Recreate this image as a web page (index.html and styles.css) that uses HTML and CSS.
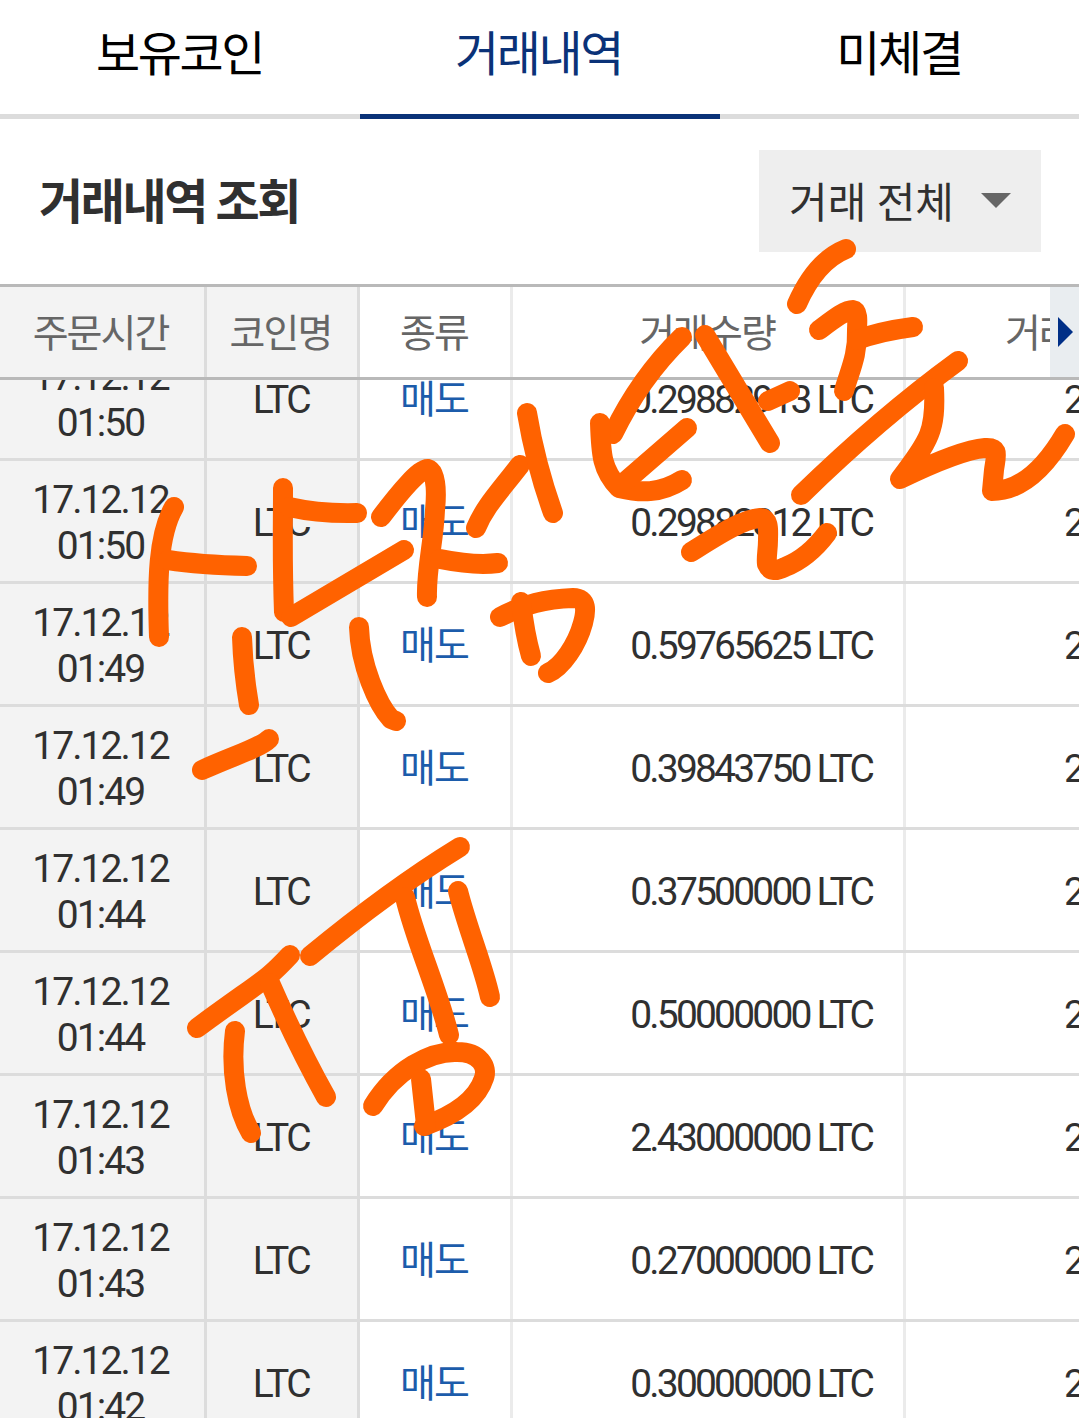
FILE: index.html
```html
<!DOCTYPE html>
<html lang="ko">
<head>
    <meta charset="UTF-8">
    <meta name="viewport" content="width=device-width, initial-scale=1.0">
    <title>거래내역</title>
    <link rel="stylesheet" href="styles.css">
</head>
<body>
    <div class="app">
        <nav class="tabs">
            <a class="tab">보유코인</a>
            <a class="tab active">거래내역</a>
            <a class="tab">미체결</a>
        </nav>

        <div class="toolbar">
            <h1>거래내역 조회</h1>
            <div class="select">
                <span>거래 전체</span>
                <svg class="caret" viewBox="0 0 30 15"><path d="M0 0h30L15 15z"/></svg>
            </div>
        </div>

        <div class="row head">
            <div class="cell fixed">주문시간</div>
            <div class="cell fixed">코인명</div>
            <div class="cell">종류</div>
            <div class="cell">거래수량</div>
            <div class="cell price">거래</div>
            <div class="next"><svg viewBox="0 0 15 30"><path d="M0 0v30l15-15z"/></svg></div>
        </div>

        <div class="list">
            <div class="row">
                <div class="cell fixed">17.12.12<br>01:50</div>
                <div class="cell fixed coin">LTC</div>
                <div class="cell sell">매도</div>
                <div class="cell amount">0.29882913 LTC</div>
                <div class="cell price">2</div>
            </div>
            <div class="row">
                <div class="cell fixed">17.12.12<br>01:50</div>
                <div class="cell fixed coin">LTC</div>
                <div class="cell sell">매도</div>
                <div class="cell amount">0.29882812 LTC</div>
                <div class="cell price">2</div>
            </div>
            <div class="row">
                <div class="cell fixed">17.12.12<br>01:49</div>
                <div class="cell fixed coin">LTC</div>
                <div class="cell sell">매도</div>
                <div class="cell amount">0.59765625 LTC</div>
                <div class="cell price">2</div>
            </div>
            <div class="row">
                <div class="cell fixed">17.12.12<br>01:49</div>
                <div class="cell fixed coin">LTC</div>
                <div class="cell sell">매도</div>
                <div class="cell amount">0.39843750 LTC</div>
                <div class="cell price">2</div>
            </div>
            <div class="row">
                <div class="cell fixed">17.12.12<br>01:44</div>
                <div class="cell fixed coin">LTC</div>
                <div class="cell sell">매도</div>
                <div class="cell amount">0.37500000 LTC</div>
                <div class="cell price">2</div>
            </div>
            <div class="row">
                <div class="cell fixed">17.12.12<br>01:44</div>
                <div class="cell fixed coin">LTC</div>
                <div class="cell sell">매도</div>
                <div class="cell amount">0.50000000 LTC</div>
                <div class="cell price">2</div>
            </div>
            <div class="row">
                <div class="cell fixed">17.12.12<br>01:43</div>
                <div class="cell fixed coin">LTC</div>
                <div class="cell sell">매도</div>
                <div class="cell amount">2.43000000 LTC</div>
                <div class="cell price">2</div>
            </div>
            <div class="row">
                <div class="cell fixed">17.12.12<br>01:43</div>
                <div class="cell fixed coin">LTC</div>
                <div class="cell sell">매도</div>
                <div class="cell amount">0.27000000 LTC</div>
                <div class="cell price">2</div>
            </div>
            <div class="row">
                <div class="cell fixed">17.12.12<br>01:42</div>
                <div class="cell fixed coin">LTC</div>
                <div class="cell sell">매도</div>
                <div class="cell amount">0.30000000 LTC</div>
                <div class="cell price">2</div>
            </div>
        </div>

        <!-- pen strokes over the page -->
        <svg class="pen" viewBox="0 0 1079 1418">
            <path d="M174 507C158 535 157 580 159 637"/>
            <path d="M168 560Q200 565 247 566"/>
            <path d="M283 488C283 530 282 560 284 612"/>
            <path d="M289 507Q320 514 357 513"/>
            <path d="M291 617L404 550"/>
            <path d="M242 637Q243 670 249 705"/>
            <path d="M269 739C260 748 235 755 202 770"/>
            <path d="M359 627C360 665 378 705 391 719L396 721"/>

            <path d="M381 517C400 492 420 468 428 469C438 472 436 500 435 510C434 540 426 570 427 597"/>
            <path d="M440 559Q475 566 498 563"/>
            <path d="M520 465C495 497 485 507 476 528"/>
            <path d="M527 413C534 455 543 485 553 513"/>
            <path d="M500 617C525 604 545 599 573 598C588 598 586 612 583 623C577 645 562 667 548 673"/>
            <path d="M521 602Q525 635 531 656"/>

            <path d="M682 337Q640 378 613 434"/>
            <path d="M705 335Q735 385 770 443"/>
            <path d="M790 391L768 401"/>
            <path d="M600 423C601 455 602 470 619 488C640 493 660 494 682 480"/>
            <path d="M687 428L619 487"/>
            <path d="M691 552C715 537 742 519 760 518C770 518 768 532 768 540C768 550 766 558 767 564C770 571 775 572 785 567C803 560 818 545 827 533"/>

            <path d="M846 249Q816 261 797 304"/>
            <path d="M819 330C835 318 845 310 853 310C859 311 857 325 857 330C858 355 850 370 844 391"/>
            <path d="M857 340C870 335 890 330 913 327"/>
            <path d="M958 361Q880 418 801 495"/>
            <path d="M934 388C936 430 930 440 900 479Q960 450 985 448C1000 447 996 455 994 470L992 491C1020 491 1045 468 1065 434"/>

            <path d="M460 847Q390 890 310 956"/>
            <path d="M290 955C265 982 262 980 197 1028"/>
            <path d="M405 897C415 940 438 990 449 1035"/>
            <path d="M458 891C468 930 483 965 490 997"/>
            <path d="M270 983Q298 1047 326 1097"/>
            <path d="M235 1031C230 1070 237 1110 251 1133"/>
            <path d="M373 1106C395 1070 430 1051 457 1052C480 1052 488 1067 484 1078C477 1100 455 1115 424 1126"/>
            <path d="M421 1079L426 1125"/>
        </svg>
    </div>
</body>
</html>
```
FILE: styles.css
```css
* {
    box-sizing: border-box;
}
body {
    margin: 0;
    font-family: Roboto, 'Noto Sans CJK KR', sans-serif;
    background: #fff;
    color: #303030;
}
.app {
    position: relative;
    display: flex;
    flex-direction: column;
    height: 1418px;
    overflow: hidden;
}
.tabs {
    display: grid;
    grid-template-columns: 360px 360px 359px;
    height: 119px;
    flex: none;
}
.tab {
    padding: 19px 1px 0 0;
    border-bottom: 5px solid #dcdcdc;
    text-align: center;
    font-size: 48px;
    line-height: 72px;
    letter-spacing: -0.05em;
    color: #000;
}
.tab.active {
    padding-right: 3px;
    color: #0a3278;
    border-bottom-color: #0a3278;
}
.toolbar {
    display: flex;
    justify-content: space-between;
    align-items: center;
    flex: none;
    height: 165px;
    padding: 0 38px 2px 39px;
}
h1 {
    margin: 0;
    padding-bottom: 5px;
    font-size: 48px;
    font-weight: 700;
    letter-spacing: -0.05em;
}
.select {
    display: flex;
    align-items: center;
    justify-content: space-between;
    width: 282px;
    height: 102px;
    padding: 0 30px;
    background: #eee;
    font-size: 42px;
}
.select span {
    padding-bottom: 2px;
}
.caret {
    width: 30px;
    height: 15px;
    fill: #666;
}
.row {
    display: grid;
    grid-template-columns: 207px 153px 153px 393px 173px;
    flex: none;
    height: 123px;
    border-bottom: 3px solid #dcdcdc;
    font-size: 39px;
    line-height: 46px;
    letter-spacing: -0.05em;
}
.cell {
    display: flex;
    align-items: center;
    justify-content: center;
    padding: 4px 2px 0 0;
    text-align: center;
    border-right: 3px solid #ebebeb;
    white-space: nowrap;
}
.cell.fixed {
    padding-right: 3px;
    background: #f3f3f3;
    border-right-color: #dcdcdc;
}
.cell.sell {
    color: #1c5cab;
}
.cell.coin {
    padding-right: 2px;
    letter-spacing: -0.065em;
}
.cell.amount {
    justify-content: flex-end;
    padding-right: 31px;
    letter-spacing: -0.072em;
}
.cell.price {
    justify-content: flex-start;
    padding-left: 158px;
    border-right: 0;
    overflow: hidden;
}
.head {
    position: relative;
    height: 96px;
    border-top: 3px solid #b9b9b9;
    border-bottom-color: #b9b9b9;
    color: #666;
}
.head .price {
    padding-left: 99px;
}
/* scroll hint on the right edge of the header */
.next {
    position: absolute;
    top: 0;
    right: 0;
    display: flex;
    align-items: center;
    width: 29px;
    height: 90px;
    padding-left: 8px;
    background: #e9edf0;
}
.next svg {
    width: 15px;
    height: 30px;
    fill: #002f87;
}
.list {
    flex: 1;
    display: flex;
    flex-direction: column;
    min-height: 0;
    overflow: hidden;
}
/* list is scrolled part of the way through its first row */
.list .row:first-child {
    margin-top: -42px;
}
.pen {
    position: absolute;
    top: 0;
    left: 0;
    width: 1079px;
    height: 1418px;
    fill: none;
    stroke: #ff6200;
    stroke-width: 20;
    stroke-linecap: round;
    stroke-linejoin: round;
    pointer-events: none;
}
```
